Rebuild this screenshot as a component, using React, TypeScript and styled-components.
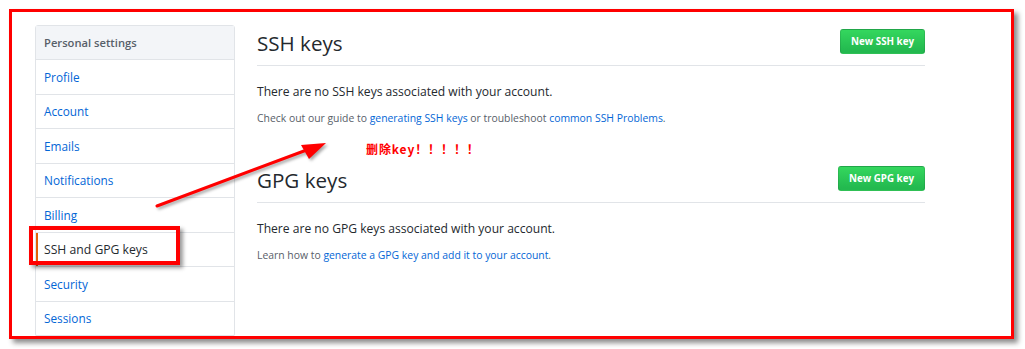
import React from "react";
import styled, { createGlobalStyle } from "styled-components";

const GlobalStyle = createGlobalStyle`
  html, body { margin: 0; padding: 0; background: #fff; }
  body { font-family: "Open Sans", "Noto Sans", "Liberation Sans", sans-serif; color: #24292e; }
  * { box-sizing: border-box; }
`;

const Page = styled.div`
  position: relative;
  width: 1025px;
  height: 349px;
  padding: 9px 0 0 9px;
  overflow: hidden;
`;

const Frame = styled.div`
  width: 1005px;
  height: 330px;
  border: 3px solid #ff0000;
  box-shadow: 4px 4px 5px rgba(0, 0, 0, 0.45);
  background: #fff;
  overflow: hidden;
  display: flex;
  align-items: flex-start;
  padding: 13px 0 0 23px;
`;

const Sidebar = styled.nav`
  width: 200px;
  flex-shrink: 0;
  border: 1px solid #e1e4e8;
  border-radius: 3px;
  background: #fff;
`;

const MenuHeading = styled.div`
  height: 34px;
  padding-left: 8px;
  display: flex;
  align-items: center;
  background: #f3f5f8;
  border-bottom: 1px solid #e1e4e8;
  font-size: 11.2px;
  font-weight: 600;
  color: #586069;
`;

const MenuItem = styled.a<{ $selected?: boolean }>`
  position: relative;
  display: flex;
  align-items: center;
  height: 34.5px;
  padding-left: 8px;
  border-bottom: 1px solid #e1e4e8;
  font-size: ${(p) => (p.$selected ? "12.2px" : "11.8px")};
  text-decoration: none;
  color: ${(p) => (p.$selected ? "#24292e" : "#0366d6")};
  &::before {
    content: "";
    display: ${(p) => (p.$selected ? "block" : "none")};
    position: absolute;
    left: 0;
    top: 0;
    bottom: 0;
    width: 2px;
    background: #e36209;
  }
`;

const Main = styled.main`
  margin-left: 22px;
  width: 668px;
  display: flex;
  flex-direction: column;
`;

const SubHead = styled.div<{ $gap?: number }>`
  display: flex;
  justify-content: space-between;
  align-items: flex-start;
  height: 41px;
  border-bottom: 1px solid #e1e4e8;
  margin-top: ${(p) => p.$gap ?? 0}px;
`;

const Heading = styled.h2`
  margin: 0;
  font-size: 20.6px;
  font-weight: 400;
  line-height: 37px;
  color: #24292e;
`;

const GreenButton = styled.button`
  margin-top: 4px;
  height: 25px;
  padding: 0 10px;
  border: 1px solid rgba(27, 31, 35, 0.12);
  border-radius: 3px;
  background: linear-gradient(#34d75e, #23b94f 90%);
  color: #fff;
  font-family: inherit;
  font-size: 9.8px;
  font-weight: 700;
  line-height: 23px;
`;

const Lead = styled.p`
  margin: 16px 0 0;
  font-size: 12.1px;
  line-height: 20px;
  color: #24292e;
`;

const Note = styled.p`
  margin: 8px 0 0;
  font-size: 10.4px;
  line-height: 16px;
  color: #586069;
`;

const Link = styled.a`
  color: #0366d6;
  text-decoration: none;
`;

const HighlightBox = styled.div`
  position: absolute;
  left: 29px;
  top: 226px;
  width: 151px;
  height: 39px;
  border: 4px solid #ff0000;
  box-shadow: 3px 3px 4px rgba(0, 0, 0, 0.4);
`;

const Annotation = styled.span`
  position: absolute;
  left: 366px;
  top: 141px;
  font-family: "Noto Sans CJK SC", "Noto Sans", sans-serif;
  font-size: 12px;
  font-weight: 700;
  letter-spacing: 0.9px;
  line-height: 16px;
  color: #ff0000;
  white-space: nowrap;
`;

const ArrowSvg = styled.svg`
  position: absolute;
  left: 0;
  top: 0;
  filter: drop-shadow(2px 2px 1.5px rgba(0, 0, 0, 0.35));
`;

const items = ["Profile", "Account", "Emails", "Notifications", "Billing", "SSH and GPG keys", "Security", "Sessions"];

export default function App() {
  return (
    <>
      <GlobalStyle />
      <Page>
        <Frame>
          <Sidebar>
            <MenuHeading>Personal settings</MenuHeading>
            {items.map((it) => (
              <MenuItem key={it} $selected={it === "SSH and GPG keys"}>
                {it}
              </MenuItem>
            ))}
          </Sidebar>
          <Main>
            <SubHead>
              <Heading>SSH keys</Heading>
              <GreenButton>New SSH key</GreenButton>
            </SubHead>
            <Lead>There are no SSH keys associated with your account.</Lead>
            <Note>
              Check out our guide to <Link>generating SSH keys</Link> or troubleshoot{" "}
              <Link>common SSH Problems</Link>.
            </Note>
            <SubHead $gap={36}>
              <Heading>GPG keys</Heading>
              <GreenButton>New GPG key</GreenButton>
            </SubHead>
            <Lead>There are no GPG keys associated with your account.</Lead>
            <Note>
              Learn how to <Link>generate a GPG key and add it to your account</Link>.
            </Note>
          </Main>
        </Frame>
        <HighlightBox />
        <Annotation>删除key！！！！！</Annotation>
        <ArrowSvg width="1025" height="349" viewBox="0 0 1025 349">
          <line x1="157" y1="206" x2="312" y2="148" stroke="#ff0000" strokeWidth="3" strokeLinecap="round" />
          <polygon points="326,143 301,145 309,159" fill="#ff0000" />
        </ArrowSvg>
      </Page>
    </>
  );
}
